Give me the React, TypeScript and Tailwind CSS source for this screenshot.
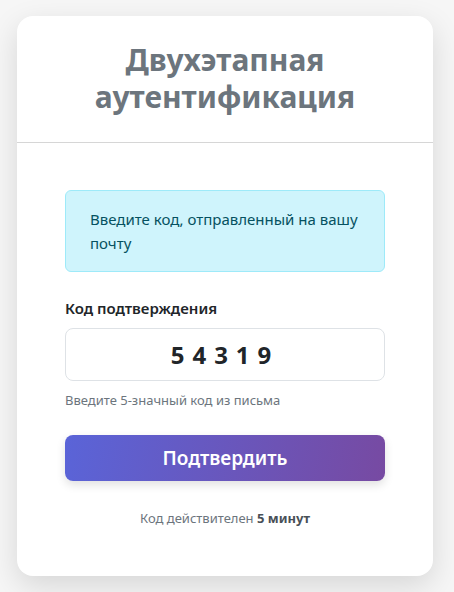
import React, { useState } from 'react';

export default function App() {
  const [code, setCode] = useState('54319');

  return (
    <div
      className="min-h-[592px] w-full bg-[#f6f6f6] px-[17px] pt-[16px] pb-[16px]"
      style={{ fontFamily: '"Noto Sans", "Open Sans", sans-serif' }}
    >
      <div className="w-[416px] h-[560px] rounded-[16px] bg-white shadow-[0_10px_30px_rgba(0,0,0,0.13)] overflow-hidden">
        <div className="border-b border-[#d6d6d6] pt-[25px] pb-[27px] text-center">
          <h1 className="text-[30px] leading-[37px] font-bold text-[#6c757d]">
            Двухэтапная
            <br />
            аутентификация
          </h1>
        </div>

        <form className="px-[48px] pt-[47px]" onSubmit={(e) => e.preventDefault()}>
          <div className="rounded-[6px] border border-[#9eeaf9] bg-[#cff4fc] px-[24px] py-[16px] text-[15px] leading-[24px] text-[#055160]">
            Введите код, отправленный на вашу почту
          </div>

          <label htmlFor="code" className="mt-[25px] block text-[15px] font-semibold text-[#212529]">
            Код подтверждения
          </label>
          <input
            id="code"
            value={code}
            maxLength={5}
            onChange={(e) => setCode(e.target.value)}
            className="mt-[8px] block h-[53px] w-full rounded-[8px] border border-[#dee2e6] text-center text-[24px] font-bold tracking-[8px] text-[#212529] outline-none"
          />
          <p className="mt-[10px] text-[13px] text-[#6c757d]">Введите 5-значный код из письма</p>

          <button
            type="submit"
            className="mt-[25px] h-[46px] w-full rounded-[8px] bg-[linear-gradient(100deg,#5a64d8,#774aa2)] text-[19px] font-semibold text-white shadow-[0_4px_10px_rgba(0,0,0,0.12)]"
          >
            Подтвердить
          </button>

          <p className="mt-[28px] text-center text-[13px] text-[#6c757d]">
            Код действителен <strong className="font-bold text-[#495057]">5 минут</strong>
          </p>
        </form>
      </div>
    </div>
  );
}
